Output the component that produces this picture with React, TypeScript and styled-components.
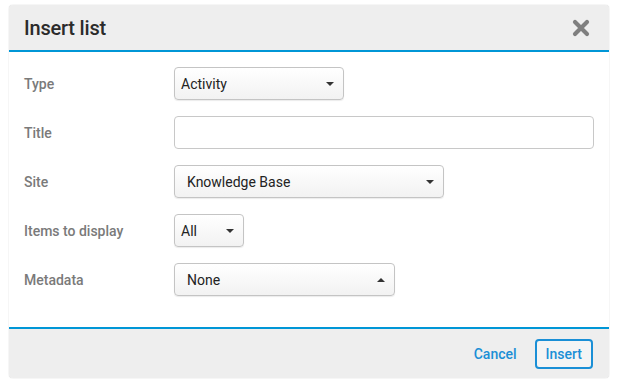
import React from "react";
import styled, {createGlobalStyle} from "styled-components";

const GlobalStyle = createGlobalStyle`
  html, body {
    margin: 0;
    background: #fff;
    font-family: Roboto, "Liberation Sans", sans-serif;
  }
`;

const Dialog = styled.div`
  margin: 5px 8px 6px 9px;
  width: 600px;
  border-radius: 4px;
  overflow: hidden;
  background: #fff;
  box-shadow: 0 0 1px rgba(0, 0, 0, 0.35);
`;

const Header = styled.header`
  display: flex;
  align-items: center;
  justify-content: space-between;
  height: 45px;
  padding: 0 18px 0 15px;
  background: #eeeeee;
  border-bottom: 2px solid #0096d6;

  h2 {
    margin: 0;
    font-size: 20px;
    font-weight: 500;
    color: #2b2b2b;
    letter-spacing: -0.2px;
  }
`;

const Close = styled.button`
  border: 0;
  padding: 0;
  background: none;
  width: 20px;
  height: 20px;
  display: flex;
  align-items: center;
  justify-content: center;
  cursor: pointer;
`;

const Body = styled.div`
  display: grid;
  grid-template-columns: 150px 1fr;
  grid-auto-rows: 33px;
  row-gap: 16px;
  align-items: center;
  padding: 15px 15px 31px 15px;
`;

const Label = styled.label`
  font-size: 14px;
  font-weight: 500;
  color: #7a7a7a;
  padding-top: 1px;
`;

const Select = styled.div<{$width: number; $pad: number}>`
  position: relative;
  box-sizing: border-box;
  width: ${p => p.$width}px;
  height: 33px;
  display: flex;
  align-items: center;
  padding-left: ${p => p.$pad}px;
  font-size: 14px;
  color: #222;
  border: 1px solid #c4c4c4;
  border-radius: 4px;
  background: linear-gradient(#ffffff, #f2f2f2);
  box-shadow: 0 1px 1px rgba(0, 0, 0, 0.08);
`;

const Caret = styled.span<{$up?: boolean}>`
  position: absolute;
  right: 9px;
  top: 50%;
  margin-top: -2px;
  width: 0;
  height: 0;
  border-left: 4px solid transparent;
  border-right: 4px solid transparent;
  ${p => p.$up
    ? "border-bottom: 4px solid #333;"
    : "border-top: 4px solid #333;"}
`;

const TextInput = styled.input`
  box-sizing: border-box;
  width: 420px;
  height: 33px;
  border: 1px solid #c8c8c8;
  border-radius: 4px;
  background: #fff;
  font: inherit;
`;

const Footer = styled.footer`
  display: flex;
  align-items: center;
  justify-content: flex-end;
  gap: 18px;
  height: 49px;
  padding: 0 16px;
  background: #eeeeee;
  border-top: 2px solid #0096d6;
`;

const Button = styled.button<{$outline?: boolean}>`
  height: 30px;
  padding: 0 ${p => (p.$outline ? "9px" : "0")};
  font-family: Roboto, "Liberation Sans", sans-serif;
  font-size: 14px;
  font-weight: 500;
  color: #1a8fd6;
  background: ${p => (p.$outline ? "#f4f4f4" : "none")};
  border: ${p => (p.$outline ? "2px solid #1a8fd6" : "0")};
  border-radius: 4px;
  cursor: pointer;
`;

const rows = [
  {label: "Type", value: "Activity", width: 170, pad: 6},
  {label: "Title"},
  {label: "Site", value: "Knowledge Base", width: 270, pad: 12},
  {label: "Items to display", value: "All", width: 70, pad: 6},
  {label: "Metadata", value: "None", width: 221, pad: 12, up: true},
];

export default function App() {
  return (
    <>
      <GlobalStyle/>
      <Dialog>
        <Header>
          <h2>Insert list</h2>
          <Close aria-label="Close">
            <svg width="18" height="18" viewBox="0 0 18 18">
              <path d="M3 3 L15 15 M15 3 L3 15" stroke="#7f7f7f" strokeWidth="4.2" strokeLinecap="round"/>
            </svg>
          </Close>
        </Header>
        <Body>
          {rows.map(row =>
            <React.Fragment key={row.label}>
              <Label>{row.label}</Label>
              {row.value
                ? <Select $width={row.width!} $pad={row.pad!}>
                    {row.value}
                    <Caret $up={row.up}/>
                  </Select>
                : <TextInput/>}
            </React.Fragment>
          )}
        </Body>
        <Footer>
          <Button>Cancel</Button>
          <Button $outline>Insert</Button>
        </Footer>
      </Dialog>
    </>
  );
}
